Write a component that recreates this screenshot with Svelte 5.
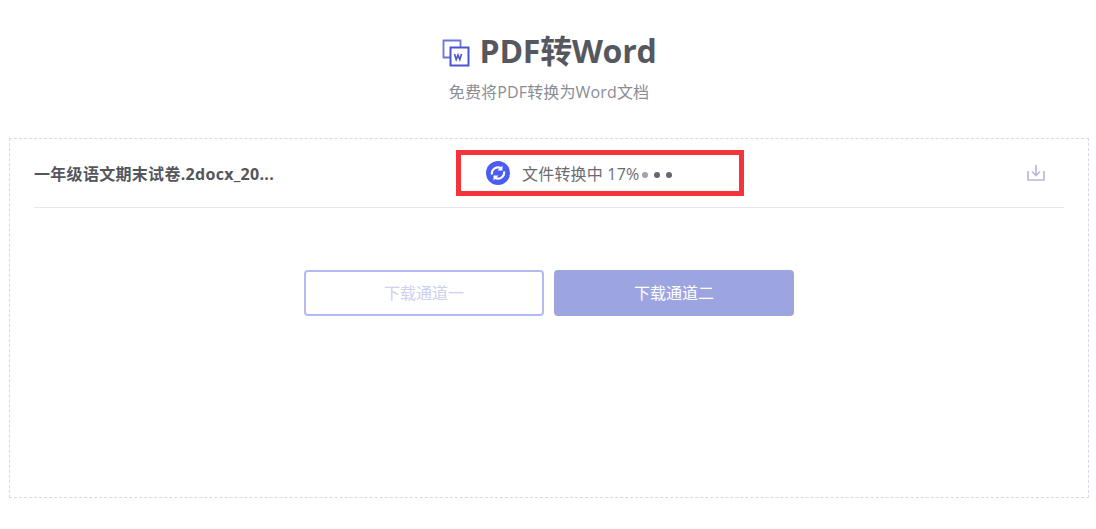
<script>
  const dots = ['a', 'b', 'c'];
</script>

<div class="page">
  <header class="head">
    <h1 class="title">
      <svg class="word-icon" viewBox="0 0 28 28" width="28" height="28" fill="none" aria-hidden="true">
        <path d="M8 18.500H1.500V1.500h17v6.500" stroke="#6a76e0" stroke-width="1.800" />
        <rect x="8.500" y="8.500" width="18" height="18" stroke="#4a55cf" stroke-width="2" />
        <path d="M12.500 15l1.700 5.500 1.800-4.500 1.800 4.500 1.700-5.500" stroke="#4a55cf" stroke-width="1.600" />
      </svg>
      <span>PDF转Word</span>
    </h1>
    <p class="sub">免费将PDF转换为Word文档</p>
  </header>

  <section class="panel">
    <div class="row">
      <div class="name">一年级语文期末试卷.2docx_20...</div>
      <div class="status">
        <svg class="spin" viewBox="0 0 24 24" width="24" height="24" aria-hidden="true">
          <circle cx="12" cy="12" r="12" fill="#4b5cf0" />
          <path d="M6 13.500a6 6 0 0 1 9.300-6" fill="none" stroke="#fff" stroke-width="2.200" />
          <path d="M18 10.500a6 6 0 0 1-9.300 6" fill="none" stroke="#fff" stroke-width="2.200" />
          <path d="M16.500 4.500v5h-5zM7.500 19.500v-5h5z" fill="#fff" />
        </svg>
        <span class="label">文件转换中 17%</span>
        <span class="dots">
          {#each dots as d}
            <i class="dot {d}"></i>
          {/each}
        </span>
      </div>
      <svg class="dl" viewBox="0 0 18 16" width="18" height="16" fill="none" aria-hidden="true">
        <path d="M9 0v10M5 6.500l4 4 4-4" stroke="#b6bbd8" stroke-width="1.700" />
        <path d="M1 6v9h16V6" stroke="#b6bbd8" stroke-width="1.700" />
      </svg>
    </div>
    <div class="actions">
      <button class="btn ghost">下载通道一</button>
      <button class="btn solid">下载通道二</button>
    </div>
  </section>
</div>

<style>
  :global(body) {
    margin: 0;
    background: #fff;
  }
  .page {
    width: 1096px;
    height: 529px;
    overflow: hidden;
    padding: 30px 0 0 9px;
    box-sizing: border-box;
    font-family: "Open Sans", "Noto Sans CJK SC", sans-serif;
  }
  .head {
    width: 1080px;
    text-align: center;
  }
  .title {
    margin: 0;
    height: 42px;
    display: flex;
    align-items: center;
    justify-content: center;
    gap: 10px;
    font-size: 32px;
    letter-spacing: -0.25px;
    line-height: 42px;
    font-weight: 700;
    color: #565860;
  }
  .word-icon {
    margin-top: 3px;
  }
  .sub {
    margin: 9px 0 0;
    font-size: 16px;
    letter-spacing: 0.15px;
    line-height: 22px;
    color: #8a8c95;
  }
  .panel {
    width: 1080px;
    height: 360px;
    margin-top: 35px;
    box-sizing: border-box;
    border: 1px dashed #d5d8ee;
    padding: 0 24px;
  }
  .row {
    display: grid;
    grid-template-columns: 422px 288px 1fr;
    align-items: center;
    height: 69px;
    box-sizing: border-box;
    border-bottom: 1px solid #e6e7ef;
  }
  .name {
    font-size: 16px;
    letter-spacing: 0.3px;
    font-weight: 700;
    color: #55565c;
    white-space: nowrap;
  }
  .status {
    display: flex;
    align-items: center;
    height: 46px;
    box-sizing: border-box;
    border: 5px solid #f5333a;
    padding-left: 25px;
    font-size: 16px;
    color: #6a6b72;
  }
  .label {
    margin-left: 12px;
    padding-bottom: 1px;
    letter-spacing: 0.2px;
  }
  .dots {
    display: flex;
    gap: 6px;
    margin: 4px 0 0 3px;
  }
  .dot {
    display: block;
    width: 6px;
    height: 6px;
    border-radius: 50%;
    background: #66676d;
  }
  .dot.a {
    background: #a2a3a8;
  }
  .dl {
    justify-self: end;
    margin-right: 19px;
  }
  .actions {
    display: flex;
    justify-content: center;
    gap: 10px;
    margin-top: 62px;
  }
  .btn {
    width: 240px;
    height: 46px;
    box-sizing: border-box;
    border-radius: 4px;
    font: inherit;
    font-size: 16px;
    padding: 0 0 2px;
  }
  .ghost {
    background: #fff;
    border: 2px solid #b4baf3;
    color: #cdd0ee;
  }
  .solid {
    background: #9da5e1;
    border: 0;
    color: #fff;
  }
</style>
